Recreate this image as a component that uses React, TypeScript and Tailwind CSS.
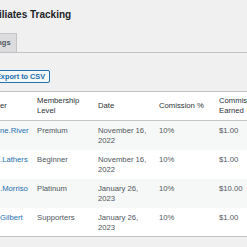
import React from 'react';

type Row = { user: string; level: string; date: [string, string]; pct: string; earned: string };

const rows: Row[] = [
  { user: 'ne.River', level: 'Premium', date: ['November 16,', '2022'], pct: '10%', earned: '$1.00' },
  { user: '.Lathers', level: 'Beginner', date: ['November 16,', '2022'], pct: '10%', earned: '$1.00' },
  { user: '.Morriso', level: 'Platinum', date: ['January 26,', '2023'], pct: '10%', earned: '$10.00' },
  { user: 'Gilbert', level: 'Supporters', date: ['January 26,', '2023'], pct: '10%', earned: '$1.00' },
];

const App: React.FC = () => {
  return (
    <div
      className="w-[247px] h-[247px] overflow-hidden bg-[#f0f0f1] text-[#3c434a]"
      style={{ fontFamily: '"Liberation Sans", Arial, sans-serif' }}
    >
      <h1 className="pt-[9px] -ml-[15px] text-[10px] leading-[12px] font-bold text-[#1d2327] whitespace-nowrap">
        Affiliates Tracking
      </h1>

      <div className="mt-[12px] flex border-b border-[#c3c4c7] h-[20px]">
        <div className="-ml-[26px] flex items-center pl-[6px] pr-[5px] bg-[#dcdcde] border border-b-0 border-[#c3c4c7] text-[7.5px] font-semibold text-[#50575e]">
          Settings
        </div>
      </div>

      <div className="mt-[17px] flex">
        <button className="-ml-[9px] h-[13px] px-[4px] rounded-[2px] border border-[#2271b1] bg-[#f6f7f7] text-[7.3px] leading-[11px] font-semibold text-[#2271b1] whitespace-nowrap">
          Export to CSV
        </button>
      </div>

      <table className="mt-[8px] table-fixed border-collapse w-[300px] bg-white text-[7.7px] border-y border-[#c3c4c7]">
        <colgroup>
          <col className="w-[37px]" />
          <col className="w-[61px]" />
          <col className="w-[61px]" />
          <col className="w-[60px]" />
          <col className="w-[81px]" />
        </colgroup>
        <thead>
          <tr className="border-b border-[#c3c4c7] text-[#2c3338] leading-[10.5px]">
            <th className="text-left font-normal align-middle h-[29px] pr-[6px]">er</th>
            <th className="text-left font-normal align-middle pr-[6px]">
              Membership
              <br />
              Level
            </th>
            <th className="text-left font-normal align-middle pr-[6px]">Date</th>
            <th className="text-left font-normal align-middle pr-[6px]">Comission %</th>
            <th className="text-left font-normal align-middle pr-[24px]">Commission Earned</th>
          </tr>
        </thead>
        <tbody>
          {rows.map((r, i) => (
            <tr key={i} className={i % 2 === 0 ? 'bg-[#f6f7f7]' : 'bg-white'}>
              <td className="align-top h-[29px] pt-[5px] pb-[4px] leading-[10px] text-[#2271b1] whitespace-nowrap overflow-hidden">
                {r.user}
              </td>
              <td className="align-top pt-[5px] leading-[10px] text-[#50575e]">{r.level}</td>
              <td className="align-top pt-[5px] leading-[10px] text-[#50575e]">
                {r.date[0]}
                <br />
                {r.date[1]}
              </td>
              <td className="align-top pt-[5px] leading-[10px] text-[#50575e]">{r.pct}</td>
              <td className="align-top pt-[5px] leading-[10px] text-[#50575e]">{r.earned}</td>
            </tr>
          ))}
        </tbody>
      </table>
    </div>
  );
};

export default App;
